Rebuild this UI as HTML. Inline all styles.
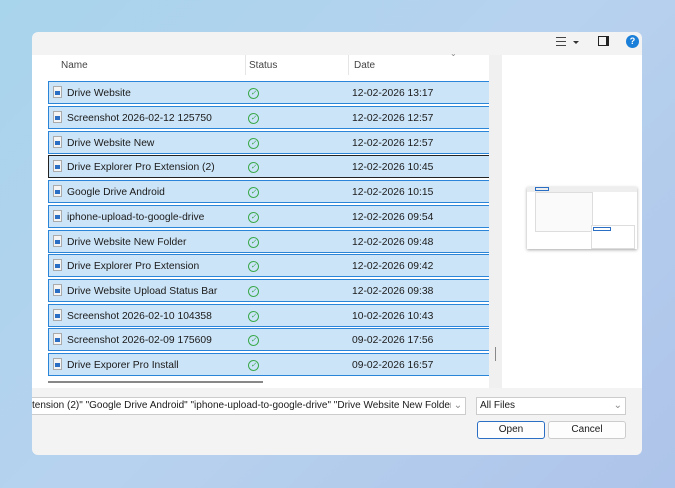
<!DOCTYPE html>
<html><head><style>
*{box-sizing:border-box;margin:0;padding:0}
body{width:675px;height:488px;overflow:hidden;background:linear-gradient(135deg,#a8d4ec 0%,#b7d2ee 50%,#aec4ea 100%);font-family:"Liberation Sans",sans-serif;font-size:10px;color:#1a1a1a;position:relative}
.dlg{position:absolute;left:32px;top:32px;width:610px;height:423px;background:#f3f3f3;border-radius:6px;overflow:hidden}
.main{position:absolute;left:0;top:23px;width:610px;height:333px;background:#fff}
.abs{position:absolute}
.row{position:absolute;left:16px;width:441px;height:23px;background:#cce4f7;border:1px solid #2a85d9;border-right:none}
.row.f{border-color:#222}
.row span{position:absolute;top:6px;font-size:10.3px}
.ic{position:absolute;left:4px;top:4px;width:9px;height:12px;background:#f4f4f4;border:1px solid #aaa}
.ic:after{content:"";position:absolute;left:1px;top:4px;width:5px;height:4px;background:#2a6fc4}
.ck{position:absolute;left:199px;top:6px;width:11px;height:11px;border:1px solid #3aa84a;border-radius:50%;font-size:7px;color:#3aa84a;text-align:center;line-height:9px}
.hdr{position:absolute;top:5px;font-size:10px;color:#444}
.btn{position:absolute;height:18px;background:#fdfdfd;border:1px solid #ccc;border-radius:3px;text-align:center;line-height:16px;font-size:10px}
</style></head><body>
<div class="dlg">
 <div class="abs" style="left:524px;top:5px;width:10px;height:9px;border-top:1px solid #444;border-bottom:1px solid #444"><div style="margin-top:3px;height:1px;background:#444"></div></div>
 <div class="abs" style="left:541px;top:9px;border-left:3px solid transparent;border-right:3px solid transparent;border-top:3px solid #333"></div>
 <div class="abs" style="left:566px;top:4px;width:11px;height:10px;border:1px solid #222;border-right-width:3px"></div>
 <div class="abs" style="left:594px;top:3px;width:13px;height:13px;border-radius:50%;background:#1a7fd9;color:#fff;font-size:9px;font-weight:bold;text-align:center;line-height:13px">?</div>
 <div class="main">
  <div class="hdr" style="left:29px">Name</div>
  <div class="hdr" style="left:217px">Status</div>
  <div class="hdr" style="left:322px">Date</div>
  <div class="abs" style="left:213px;top:0;width:1px;height:20px;background:#e5e5e5"></div>
  <div class="abs" style="left:316px;top:0;width:1px;height:20px;background:#e5e5e5"></div>
  <div class="abs" style="left:418px;top:-6px;font-size:8px;color:#888">⌄</div>
  <div class="abs" style="left:457px;top:0;width:13px;height:333px;background:#f0f0f0"></div>
  <div class="abs" style="left:463px;top:292px;width:1px;height:14px;background:#888"></div>
  <div class="abs" style="left:16px;top:326px;width:215px;height:2px;background:#888"></div>
  <div class="abs" style="left:495px;top:132px;width:110px;height:62px;background:#fff;box-shadow:0 1px 3px rgba(0,0,0,.35)">
   <div style="position:absolute;left:0;top:0;width:110px;height:5px;background:#eee"></div>
   <div style="position:absolute;left:8px;top:0;width:14px;height:4px;border:1px solid #2a6fc4"></div>
   <div style="position:absolute;left:8px;top:5px;width:58px;height:40px;border:1px solid #ddd;background:#fafafa"></div>
   <div style="position:absolute;left:64px;top:38px;width:44px;height:24px;border:1px solid #ddd;background:#fff"></div>
   <div style="position:absolute;left:66px;top:40px;width:18px;height:4px;border:1px solid #2a6fc4"></div>
  </div>
 </div>
 <div class="main" style="background:transparent;top:26px">
 <div class="row" style="top:23px"><i class="ic"></i><span style="left:18px">Drive Website</span><i class="ck">✓</i><span style="left:303px">12-02-2026 13:17</span></div>
 <div class="row" style="top:48px"><i class="ic"></i><span style="left:18px">Screenshot 2026-02-12 125750</span><i class="ck">✓</i><span style="left:303px">12-02-2026 12:57</span></div>
 <div class="row" style="top:73px"><i class="ic"></i><span style="left:18px">Drive Website New</span><i class="ck">✓</i><span style="left:303px">12-02-2026 12:57</span></div>
 <div class="row f" style="top:97px"><i class="ic"></i><span style="left:18px">Drive Explorer Pro Extension (2)</span><i class="ck">✓</i><span style="left:303px">12-02-2026 10:45</span></div>
 <div class="row" style="top:122px"><i class="ic"></i><span style="left:18px">Google Drive Android</span><i class="ck">✓</i><span style="left:303px">12-02-2026 10:15</span></div>
 <div class="row" style="top:147px"><i class="ic"></i><span style="left:18px">iphone-upload-to-google-drive</span><i class="ck">✓</i><span style="left:303px">12-02-2026 09:54</span></div>
 <div class="row" style="top:172px"><i class="ic"></i><span style="left:18px">Drive Website New Folder</span><i class="ck">✓</i><span style="left:303px">12-02-2026 09:48</span></div>
 <div class="row" style="top:196px"><i class="ic"></i><span style="left:18px">Drive Explorer Pro Extension</span><i class="ck">✓</i><span style="left:303px">12-02-2026 09:42</span></div>
 <div class="row" style="top:221px"><i class="ic"></i><span style="left:18px">Drive Website Upload Status Bar</span><i class="ck">✓</i><span style="left:303px">12-02-2026 09:38</span></div>
 <div class="row" style="top:246px"><i class="ic"></i><span style="left:18px">Screenshot 2026-02-10 104358</span><i class="ck">✓</i><span style="left:303px">10-02-2026 10:43</span></div>
 <div class="row" style="top:270px"><i class="ic"></i><span style="left:18px">Screenshot 2026-02-09 175609</span><i class="ck">✓</i><span style="left:303px">09-02-2026 17:56</span></div>
 <div class="row" style="top:295px"><i class="ic"></i><span style="left:18px">Drive Exporer Pro Install</span><i class="ck">✓</i><span style="left:303px">09-02-2026 16:57</span></div>
 </div>
 <div class="abs" style="left:0;top:365px;width:434px;height:18px;background:#fff;border:1px solid #ccc;border-left:none;overflow:hidden;white-space:nowrap;line-height:16px;font-size:10px">tension (2)" "Google Drive Android" "iphone-upload-to-google-drive" "Drive Website New Folder" "<span style="position:absolute;right:0;top:0;width:14px;height:16px;background:#fff;color:#888;text-align:center">⌄</span></div>
 <div class="abs" style="left:444px;top:365px;width:150px;height:18px;background:#fff;border:1px solid #ccc;line-height:16px;padding-left:3px">All Files<span style="position:absolute;right:3px;top:0;color:#888">⌄</span></div>
 <div class="btn" style="left:445px;top:389px;width:68px;border-color:#2a6fc4">Open</div>
 <div class="btn" style="left:516px;top:389px;width:78px">Cancel</div>
</div>
</body></html>
